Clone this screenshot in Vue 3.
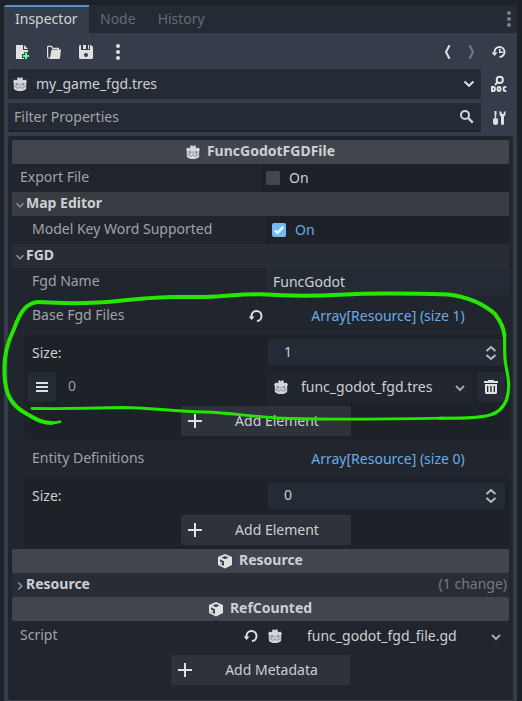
<script setup>
const tabs = ['Node', 'History']
</script>

<template>
  <div class="window">
    <svg class="defs" width="0" height="0">
      <symbol id="godot" viewBox="0 0 16 16">
        <path fill="#d4d6d9" d="M1 5.400 2.700 3.500l1.500.7 1-.5.1-1.900 1.800-.6.8 1.400h.2l.8-1.400 1.800.6.1 1.900 1 .5 1.500-.7L15 5.400l-.8 1.500v5c0 1.900-3 3.100-6.200 3.100s-6.200-1.200-6.200-3.100v-5z" />
        <path d="M1.800 10.600h2.400l.4 1.500h2.200l.3-1.200h1.800l.3 1.200h2.200l.4-1.500h2.400" fill="none" stroke="#8d9197" stroke-width=".9" />
        <circle cx="4.900" cy="8.200" r="1.500" fill="#94989e" /><circle cx="11.100" cy="8.200" r="1.500" fill="#94989e" />
        <path d="M8 7.600v2" stroke="#94989e" />
      </symbol>
      <symbol id="new" viewBox="0 0 16 16">
        <path fill="#e0e0e0" d="M2 1h7v5h5v2.200h-4V10H8v4h2v1H2zM10 1l4 4h-4z" />
        <path fill="#5fff97" d="M11 9h2v2h2v2h-2v2h-2v-2H9v-2h2z" />
      </symbol>
      <symbol id="folder" viewBox="0 0 16 16">
        <path fill="none" stroke="#e0e0e0" stroke-width="1.200" d="M2.700 14 1.600 13V3.200q0-.8.8-.8h3l1.500 2h5.500V6" />
        <path fill="#e0e0e0" d="M5.500 5.500H15l-1 8.700-.8.800H2.500L4 13.500z" />
      </symbol>
      <symbol id="save" viewBox="0 0 16 16">
        <path fill="#e0e0e0" fill-rule="evenodd" d="M2 1h1v5h9V1h1l2 2v11l-1 1H2l-1-1V2zM5 1h3v4H5zM10 1h1v4h-1zM8 9a2 2 0 1 0 0 4 2 2 0 0 0 0-4z" />
      </symbol>
      <symbol id="dots" viewBox="0 0 16 16">
        <circle cx="8" cy="2" r="2" /><circle cx="8" cy="8" r="2" /><circle cx="8" cy="14" r="2" />
      </symbol>
      <symbol id="back" viewBox="0 0 16 16"><path d="M10.500 1.300 7 8l3.500 6.700" fill="none" stroke="currentColor" stroke-width="2" /></symbol>
      <symbol id="forward" viewBox="0 0 16 16"><path d="M6.500 1.300 10 8l-3.500 6.700" fill="none" stroke="currentColor" stroke-width="2" /></symbol>
      <symbol id="history" viewBox="0 0 16 16">
        <path fill="none" stroke="#e0e0e0" stroke-width="2" d="M3.500 9V8a5 5 0 1 1 5 5" />
        <path fill="#e0e0e0" d="M.5 8.500h6l-3 3.500zM8 5h1.600v2.500H12V9H8z" />
      </symbol>
      <symbol id="doc" viewBox="0 0 16 18">
        <circle cx="8.800" cy="4.900" r="3.100" fill="none" stroke="#e0e0e0" stroke-width="2" />
        <path d="M6.800 7 4 9.900" fill="none" stroke="#e0e0e0" stroke-width="2" />
        <path fill="none" stroke="#e0e0e0" stroke-width="2" d="M1 12v4h1.500c1.900 0 1.900-4 0-4zM8 12c-2 0-2 4 0 4s2-4 0-4zM15.300 12h-1.100c-2.200 0-2.200 4 0 4h1.100" />
      </symbol>
      <symbol id="search" viewBox="0 0 16 16">
        <circle cx="6" cy="5.900" r="4" fill="none" stroke="#d0d2d5" stroke-width="2" /><path d="m8.800 8.700 5 5" stroke="#d0d2d5" stroke-width="2.400" />
      </symbol>
      <symbol id="tools" viewBox="0 0 16 16">
        <path fill="#e0e0e0" d="M3.500 1h2v3l-.3 1v3.500H7V13q0 2-2.500 2T2 13V8.500h1.700V5l-.2-1zM8.500 1v3q0 1.500 1.500 2.500V14l1 1h1l1-1V6.500q1.500-1 1.500-2.500V1L12.700 2v2h-2V2z" />
      </symbol>
      <symbol id="chev" viewBox="0 0 16 16"><path d="m4 6 4 4 4-4" fill="none" stroke="currentColor" stroke-width="2" /></symbol>
      <symbol id="bigchev" viewBox="0 0 16 16"><path d="m3.500 5.500 4.500 4.300 4.500-4.300" fill="none" stroke="currentColor" stroke-width="2" /></symbol>
      <symbol id="revert" viewBox="0 0 16 16">
        <path fill="none" stroke="#e0e0e0" stroke-width="2" d="M3.500 9V8A5 5 0 1 1 9 13" /><path fill="#e0e0e0" d="M.7 8.500h5.800L3.600 12z" />
      </symbol>
      <symbol id="updown" viewBox="0 0 16 16"><path d="m3.500 6 4.500-4 4.500 4m-9 4 4.500 4 4.500-4" fill="none" stroke="#b8babd" stroke-width="2" /></symbol>
      <symbol id="menu" viewBox="0 0 16 16"><path fill="#e0e0e0" d="M2 3h12v2H2zM2 7h12v2H2zM2 11h12v2H2z" /></symbol>
      <symbol id="trash" viewBox="0 0 16 16">
        <path fill="#e0e0e0" fill-rule="evenodd" d="M5 1h6v1h4v2H1V2h4zM2 5h12v9l-1 1H3l-1-1zM4 7v6h1.300V7zM7.300 7v6h1.400V7zM10.700 7v6H12V7z" />
      </symbol>
      <symbol id="plus" viewBox="0 0 16 16"><path fill="#e0e0e0" d="M7 1h2v6h6v2H9v6H7V9H1V7h6z" /></symbol>
      <symbol id="box" viewBox="0 0 16 16">
        <path fill="#e0e0e0" fill-rule="evenodd" d="m8 1 7 3v8l-7 3.500L1 12V4zM8 2.900 4.500 4.500 8 6.200l3.500-1.700zM3 6.200V11l4 1.900V8.200z" />
        <path fill="#e0e0e0" d="m3 8.500 2 1v2l-2-1z" />
      </symbol>
    </svg>

    <section class="dock">
      <nav class="tabs">
        <span class="tab active">Inspector</span>
        <span v-for="t in tabs" :key="t" class="tab">{{ t }}</span>
        <svg class="icon more"><use href="#dots" /></svg>
      </nav>

      <div class="toolbar">
        <svg class="icon"><use href="#new" /></svg>
        <svg class="icon"><use href="#folder" /></svg>
        <svg class="icon"><use href="#save" /></svg>
        <svg class="icon white"><use href="#dots" /></svg>
        <span class="grow"></span>
        <svg class="icon nav"><use href="#back" /></svg>
        <svg class="icon nav off"><use href="#forward" /></svg>
        <svg class="icon"><use href="#history" /></svg>
      </div>

      <div class="line">
        <div class="field object">
          <svg class="icon"><use href="#godot" /></svg>
          <span class="grow">my_game_fgd.tres</span>
          <svg class="icon bright"><use href="#bigchev" /></svg>
        </div>
        <svg class="icon doc"><use href="#doc" /></svg>
      </div>
      <div class="line second">
        <div class="field filter">
          <span class="grow">Filter Properties</span>
          <svg class="icon"><use href="#search" /></svg>
        </div>
        <svg class="icon"><use href="#tools" /></svg>
      </div>

      <main class="inspector">
        <header class="category"><svg class="icon"><use href="#godot" /></svg>FuncGodotFGDFile</header>
        <div class="prop">
          <span class="name">Export File</span>
          <div class="value dark check"><i class="cb"></i>On</div>
        </div>
        <div class="group lit"><svg class="arrow"><use href="#chev" /></svg>Map Editor</div>
        <div class="prop nested">
          <span class="name">Model Key Word Supported</span>
          <div class="value dark check on">
            <i class="cb"><svg viewBox="0 0 14 14"><path d="m2.700 7.500 2.800 2.400 5.700-6" fill="none" stroke="#fff" stroke-width="2.300" /></svg></i>On
          </div>
        </div>
        <div class="group"><svg class="arrow"><use href="#chev" /></svg>FGD</div>
        <div class="prop nested text">
          <span class="name">Fgd Name</span>
          <div class="value edit">FuncGodot</div>
        </div>

        <div class="prop nested array">
          <span class="name">Base Fgd Files</span>
          <svg class="icon undo"><use href="#revert" /></svg>
          <div class="value link">Array[Resource] (size 1)</div>
        </div>
        <div class="sub">
          <div class="size"><span>Size:</span><div class="spin"><span>1</span><svg class="icon"><use href="#updown" /></svg></div></div>
          <div class="element">
            <div class="btn sq"><svg class="icon"><use href="#menu" /></svg></div>
            <span class="index">0</span>
            <div class="res">
              <svg class="icon"><use href="#godot" /></svg>
              <span class="grow">func_godot_fgd.tres</span>
              <svg class="icon chev"><use href="#chev" /></svg>
            </div>
            <div class="btn sq"><svg class="icon"><use href="#trash" /></svg></div>
          </div>
          <div class="add"><svg class="icon"><use href="#plus" /></svg><span>Add Element</span></div>
        </div>

        <div class="prop nested array entity">
          <span class="name">Entity Definitions</span>
          <div class="value link">Array[Resource] (size 0)</div>
        </div>
        <div class="sub last">
          <div class="size"><span>Size:</span><div class="spin"><span>0</span><svg class="icon"><use href="#updown" /></svg></div></div>
          <div class="add"><svg class="icon"><use href="#plus" /></svg><span>Add Element</span></div>
        </div>

        <header class="category"><svg class="icon"><use href="#box" /></svg>Resource</header>
        <div class="group"><svg class="arrow right"><use href="#chev" /></svg><span class="grow">Resource</span><span class="note">(1 change)</span></div>
        <header class="category"><svg class="icon"><use href="#box" /></svg>RefCounted</header>
        <div class="prop script">
          <span class="name">Script</span>
          <svg class="icon undo"><use href="#revert" /></svg>
          <div class="file">
            <svg class="icon"><use href="#godot" /></svg>
            <span class="grow">func_godot_fgd_file.gd</span>
            <svg class="icon chev"><use href="#chev" /></svg>
          </div>
        </div>
        <div class="add meta"><svg class="icon"><use href="#plus" /></svg><span>Add Metadata</span></div>
      </main>
    </section>

    <svg class="marker" viewBox="0 0 522 701" fill="none" stroke="#26e600" stroke-linecap="round" stroke-linejoin="round">
      <path stroke-width="4" d="M38 302C26 303 20 312 14 329C7 344 4 355 4.500 374C5 395 12 406 27 414C36 419 42 423 52 423" />
      <path stroke-width="2.600" d="M50 423Q56 423 60 421.800" />
      <path stroke-width="4" d="M38 302C70 304 100 303 122 300.500Q150 297.500 172 297H205C230 296 240 294 261 294.300Q300 297 340 294.700T448 294.500C470 297 486 306 495 314Q504 326 504.500 336" />
      <path stroke-width="3.200" d="M504.500 334C505 350 504 356 506 366C509 381 510 388 506.500 400C503 408 498 413 490 415C478 418 465 418 440 418.300" />
      <path stroke-width="2.800" d="M445 418.200C400 419 340 420 290 418.500C250 417 235 413 205 412C170 411 148 407.500 122 407.500Q75 409 32 408.500" />
    </svg>
  </div>
</template>

<style>
html, body { margin: 0; background: #1d2229; }
</style>

<style scoped>
.window { position: relative; box-sizing: border-box; width: 522px; height: 701px; padding: 5px 5px 0 4px; overflow: hidden; background: #1d2229; color: #cdcfd2; font: 14px/20px "Noto Sans", sans-serif; white-space: nowrap; }
.window * { box-sizing: border-box; }
.defs { position: absolute; }
.dock { display: flex; flex-direction: column; width: 513px; height: 696px; background: #363d4a; border-radius: 3px 3px 0 0; overflow: hidden; }
.icon { display: block; width: 16px; height: 16px; flex: none; }
.grow { flex: 1; }
.tabs { display: flex; height: 28px; flex: none; background: #252b34; }
.tab { padding: 4px 11px 0; color: #666a71; }
.tab.active { width: 85px; padding-top: 2px; border-top: 2px solid #5792cb; background: #363d4a; color: #d2d4d7; }
.more { margin: 6px 0 0 auto; fill: #7c8087; }
.toolbar { display: flex; align-items: center; flex: none; gap: 16px; height: 36px; padding: 2px 10px 0; }
.white { fill: #e0e0e0; }
.nav { margin-right: -8px; color: #e0e0e0; }
.nav.off { margin-right: -4px; color: #777c85; }
.line { display: flex; align-items: center; flex: none; gap: 10px; padding: 0 4px; }
.field { display: flex; align-items: center; width: 473px; background: #252b34; border-radius: 2px; }
.object { height: 30px; padding: 0 4px; gap: 8px; }
.doc { width: 16px; height: 18px; }
.second { margin-top: 4px; }
.filter { height: 29px; padding: 0 6px; border-bottom: 2px solid #1d2229; color: #a2a5a9; }
.bright { color: #dcdee0; }
.inspector { margin: 4px 4px 0; padding: 4px 4px 0; height: 564px; flex: none; background: #21262e; border-radius: 2px; border-bottom: 1px solid #1d2229; }
.category { display: flex; align-items: center; justify-content: center; gap: 6px; height: 24px; padding: 0 1px 2px 0; border-radius: 2px; background: #41454d; font-weight: 700; }
.category .icon { margin-top: 1px; }
.group { display: flex; align-items: center; height: 24px; padding: 0 2px 2px; background: #282c35; font-weight: 700; }
.group.lit { background: #393c43; }
.arrow { width: 14px; height: 14px; margin: 3px -1px 0; color: #898c92; }
.arrow.right { transform: rotate(-90deg); }
.note { color: #777a80; font-weight: 400; }
.prop { display: flex; align-items: center; height: 28px; padding-left: 8px; }
.nested { padding-left: 20px; }
.name { flex: 1; padding-bottom: 2px; color: #a0a2a6; }
.value { width: 242px; height: 28px; line-height: 28px; }
.dark { display: flex; align-items: center; gap: 9px; padding-left: 5px; background: #1d2128; }
.prop .check { width: 248px; padding-left: 11px; margin-left: -6px; }
.prop:not(.nested) .check { padding-left: 5px; margin-left: 0; }
.nested .check { width: 242px; padding-left: 5px; margin-left: 0; }
.cb { width: 14px; height: 14px; border-radius: 2px; background: #43464e; }
.cb svg { display: block; width: 14px; height: 14px; }
.on { color: #67a9e6; }
.on .cb { background: #70bafa; }
.text { height: 29px; align-items: flex-start; }
.text .name { line-height: 26px; }
.edit { height: 27px; padding-left: 6px; background: #252b34; }
.array { height: 38px; }
.array .name { padding-bottom: 3px; }
.link { color: #68ade9; text-align: center; }
.array .link { line-height: 28px; }
.undo { margin-right: 3px; }
.sub { height: 105px; margin-left: 12px; padding: 4px; border-radius: 3px; background: #1d2128; }
.sub.last { height: 71px; }
.size { display: flex; align-items: center; justify-content: space-between; height: 27px; padding-left: 4px; }
.spin { display: flex; align-items: center; justify-content: space-between; width: 237px; height: 27px; padding: 0 6px 0 16px; background: #252b34; border-radius: 2px; }
.spin span { padding-bottom: 2px; }
.element { display: flex; align-items: center; height: 30px; margin-top: 6px; }
.sq { display: flex; align-items: center; justify-content: center; width: 28px; height: 30px; background: #252b34; border-radius: 2px; }
.index { flex: 1; padding-left: 12px; padding-bottom: 2px; color: #999ca0; }
.res { display: flex; align-items: center; width: 206px; height: 30px; margin-right: 4px; padding: 0 5px 0 6px; background: #21262e; border-radius: 2px; }
.res .grow { padding-left: 12px; }
.chev { width: 16px; height: 16px; color: #a2a5a9; }
.res .chev { margin-top: 2px; }
.add { display: flex; align-items: center; width: 170px; height: 30px; margin: 4px auto 0 153px; padding: 0 6px; border-radius: 2px; background: #2e323a; }
.add span { flex: 1; padding-left: 6px; text-align: center; }
.last .add { margin-top: 6px; }
.script { height: 30px; }
.script .undo { margin-right: 8px; }
.file { display: flex; align-items: center; width: 242px; }
.file .grow { padding-left: 24px; }
.file .chev { margin: 2px 5px 0 0; }
.meta { width: 179px; margin: 4px 0 0 159px; }
.marker { position: absolute; inset: 0; width: 522px; height: 701px; pointer-events: none; }
</style>
